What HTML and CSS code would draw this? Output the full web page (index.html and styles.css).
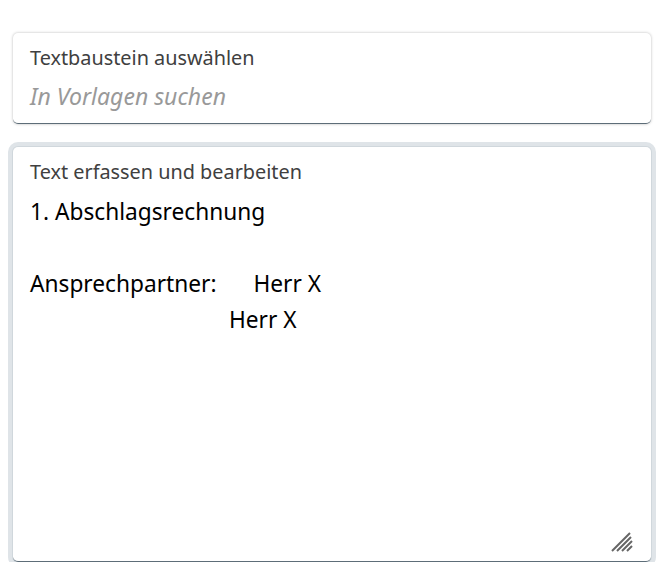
FILE: index.html
```html
<!DOCTYPE html>
<html lang="de">
<head>
<meta charset="utf-8">
<title>Textbaustein</title>
<link rel="stylesheet" href="styles.css">
</head>
<body>
<div class="page">
  <div class="card search">
    <div class="label">Textbaustein auswählen</div>
    <div class="placeholder">In Vorlagen suchen</div>
  </div>
  <div class="card editor">
    <div class="label">Text erfassen und bearbeiten</div>
    <div class="content">
      <div class="line">1. Abschlagsrechnung</div>
      <div class="line">&nbsp;</div>
      <div class="line"><span class="key">Ansprechpartner:</span>Herr X</div>
      <div class="line indent">Herr X</div>
    </div>
    <svg class="grip" width="24" height="24" viewBox="0 0 24 24">
      <path d="M2 22 L20 4 M7 22 L21 8 M12 22 L22 12 M17 22 L22 17" stroke="#666" stroke-width="2" fill="none"/>
    </svg>
  </div>
</div>
</body>
</html>
```
FILE: styles.css
```css
html, body { margin: 0; padding: 0; background: #fff; }
body { font-family: "Noto Sans", "Open Sans", sans-serif; }
.page {
  padding: 33px 19px 0 13px;
  display: flex;
  flex-direction: column;
  gap: 23px;
}
.card {
  background: #fff;
  border-radius: 5px;
  border-bottom: 1px solid #5d6d78;
  position: relative;
}
.search {
  box-shadow: 0 0 3px rgba(0,0,0,0.28);
  padding: 11px 17px 0;
  box-sizing: border-box;
  height: 91px;
}
.label {
  font-size: 19.85px;
  color: #404040;
  line-height: 27px;
}
.placeholder {
  font-size: 23px;
  font-style: italic;
  color: #999;
  line-height: 30px;
  margin-top: 10px;
}
.editor {
  height: 415px;
  box-sizing: border-box;
  padding: 11px 17px 0;
  box-shadow: 0 0 0 1px #d0d7dc, 0 0 0 5px #dfe4e8;
}
.content { margin-top: 9px; }
.line {
  font-size: 22.7px;
  line-height: 36px;
  color: #000;
  white-space: nowrap;
}
.key { display: inline-block; margin-right: 37px; }
.indent { padding-left: 199px; }
.grip { position: absolute; right: 17px; bottom: 8px; }
```
